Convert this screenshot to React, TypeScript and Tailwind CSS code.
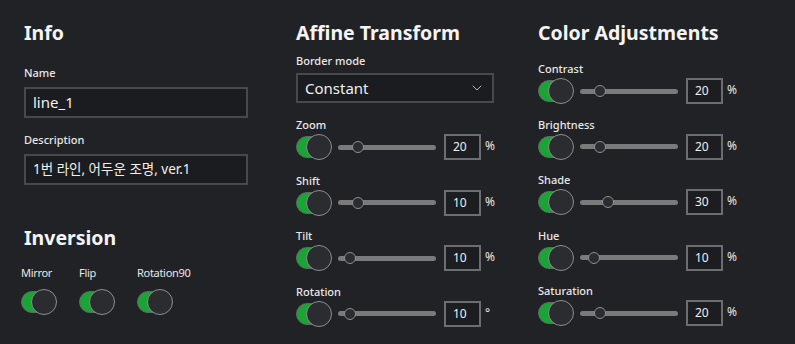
import { ChevronDown } from "lucide-react";

type Row = { label: string; value: string; unit: string; pos: number };

const affineRows: Row[] = [
  { label: "Zoom", value: "20", unit: "%", pos: 0.2 },
  { label: "Shift", value: "10", unit: "%", pos: 0.2 },
  { label: "Tilt", value: "10", unit: "%", pos: 0.12 },
  { label: "Rotation", value: "10", unit: "°", pos: 0.12 },
];

const colorRows: Row[] = [
  { label: "Contrast", value: "20", unit: "%", pos: 0.2 },
  { label: "Brightness", value: "20", unit: "%", pos: 0.2 },
  { label: "Shade", value: "30", unit: "%", pos: 0.29 },
  { label: "Hue", value: "10", unit: "%", pos: 0.14 },
  { label: "Saturation", value: "20", unit: "%", pos: 0.2 },
];

function Toggle() {
  return (
    <div className="relative w-[36px] h-[26px] shrink-0">
      <div className="absolute left-0 top-[2px] h-[22px] w-[30px] rounded-full bg-[#1aa435] border border-[#5f6a62]" />
      <div className="absolute right-0 top-0 size-[26px] rounded-full bg-[#2b2c30] border-[1.5px] border-[#8e8e8e]" />
    </div>
  );
}

function Slider({ pos }: { pos: number }) {
  return (
    <div className="relative h-[26px] flex-1 flex items-center">
      <div className="h-[5px] w-full rounded-full bg-[#7a7a7a]" />
      <div
        className="absolute top-[7px] size-[12px] -ml-[6px] rounded-full bg-[#2b2c30] border-[1.5px] border-[#8e8e8e]"
        style={{ left: `${pos * 100}%` }}
      />
    </div>
  );
}

function ControlRow({ row }: { row: Row }) {
  return (
    <div>
      <div className="text-[11px] leading-[16px] font-medium text-[#e8e8e8] mb-[1px]">{row.label}</div>
      <div className="flex items-center">
        <Toggle />
        <div className="ml-[6px] w-[98px] flex">
          <Slider pos={row.pos} />
        </div>
        <div className="ml-[8px] w-[37px] h-[26px] border-2 border-[#6c6d70] bg-[#1c1d20] text-[12px] text-[#f0f0f0] pl-[7px] flex items-center">
          {row.value}
        </div>
        <span className="ml-[4px] text-[12px] text-[#e8e8e8] -mt-[2px]">{row.unit}</span>
      </div>
    </div>
  );
}

function Heading({ children }: { children: string }) {
  return <h2 className="text-[19.5px] leading-[28px] font-bold text-[#f4f4f4]">{children}</h2>;
}

function Label({ children }: { children: string }) {
  return <div className="text-[11px] leading-[16px] font-medium text-[#e8e8e8]">{children}</div>;
}

export default function App() {
  return (
    <div
      className="w-[795px] h-[344px] bg-[#212226] flex pl-[24px] pt-[19px] overflow-hidden"
      style={{ fontFamily: '"Noto Sans", "Noto Sans CJK KR", sans-serif' }}
    >
      <div className="w-[224px] flex flex-col">
        <Heading>Info</Heading>
        <div className="mt-[18px]">
          <Label>Name</Label>
        </div>
        <div className="mt-[6px] h-[31px] border-2 border-[#48494d] bg-[#1b1c1f] text-[15px] text-[#f0f0f0] pl-[7px] flex items-center">
          line_1
        </div>
        <div className="mt-[14px]">
          <Label>Description</Label>
        </div>
        <div className="mt-[6px] h-[31px] border-2 border-[#48494d] bg-[#1b1c1f] text-[13.5px] text-[#f0f0f0] pl-[7px] flex items-center">
          1번 라인, 어두운 조명, ver.1
        </div>
        <div className="mt-[39px]">
          <Heading>Inversion</Heading>
        </div>
        <div className="mt-[13px] flex gap-[22px] -ml-[3px]">
          {["Mirror", "Flip", "Rotation90"].map((l) => (
            <div key={l} className="flex flex-col">
              <div className="text-[11px] leading-[16px] text-[#e8e8e8] tracking-[-0.3px]">{l}</div>
              <div className="mt-[8px]">
                <Toggle />
              </div>
            </div>
          ))}
        </div>
      </div>

      <div className="ml-[48px] w-[242px] flex flex-col">
        <Heading>Affine Transform</Heading>
        <div className="mt-[6px]">
          <Label>Border mode</Label>
        </div>
        <div className="mt-[4px] w-[198px] h-[30px] border-2 border-[#48494d] bg-[#1b1c1f] flex items-center justify-between pl-[7px] pr-[7px]">
          <span className="text-[15px] text-[#f0f0f0]">Constant</span>
          <ChevronDown size={16} strokeWidth={1.25} className="text-[#d8d8d8]" />
        </div>
        <div className="mt-[14px] flex flex-col gap-[12.5px]">
          {affineRows.map((r) => (
            <ControlRow key={r.label} row={r} />
          ))}
        </div>
      </div>

      <div className="flex flex-col">
        <Heading>Color Adjustments</Heading>
        <div className="mt-[14px] flex flex-col gap-[12.5px]">
          {colorRows.map((r) => (
            <ControlRow key={r.label} row={r} />
          ))}
        </div>
      </div>
    </div>
  );
}
